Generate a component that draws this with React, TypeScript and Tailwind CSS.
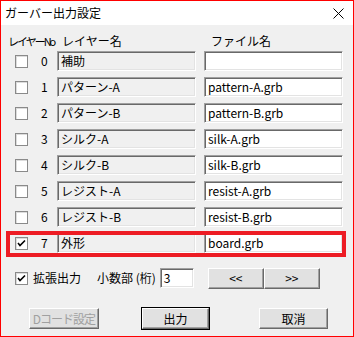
import React from 'react';

type Layer = { no: number; name: string; file: string; checked: boolean };

const layers: Layer[] = [
  { no: 0, name: '補助', file: '', checked: false },
  { no: 1, name: 'パターン-A', file: 'pattern-A.grb', checked: false },
  { no: 2, name: 'パターン-B', file: 'pattern-B.grb', checked: false },
  { no: 3, name: 'シルク-A', file: 'silk-A.grb', checked: false },
  { no: 4, name: 'シルク-B', file: 'silk-B.grb', checked: false },
  { no: 5, name: 'レジスト-A', file: 'resist-A.grb', checked: false },
  { no: 6, name: 'レジスト-B', file: 'resist-B.grb', checked: false },
  { no: 7, name: '外形', file: 'board.grb', checked: true },
];

const sunken =
  'border border-t-[#a0a0a0] border-l-[#a0a0a0] border-r-white border-b-white shadow-[inset_1px_1px_0_#696969,inset_-1px_-1px_0_#e3e3e3]';

const raised =
  'border border-t-white border-l-white border-r-[#696969] border-b-[#696969] shadow-[inset_-1px_-1px_0_#a0a0a0] bg-[#e1e1e1]';

function CheckBox({ checked }: { checked: boolean }) {
  return (
    <div className="flex h-[13px] w-[13px] shrink-0 items-center justify-center border border-[#8a8a8a] bg-white shadow-[inset_1px_1px_0_#dcdcdc]">
      {checked && (
        <svg width="9" height="9" viewBox="0 0 9 9">
          <path d="M1 4 L3 6.5 L8 1.5" stroke="#000" strokeWidth="1.6" fill="none" />
        </svg>
      )}
    </div>
  );
}

function Btn({ label, disabled, primary, w }: { label: string; disabled?: boolean; primary?: boolean; w: string }) {
  return (
    <div className={`${primary ? 'border border-[#000]' : ''} flex`}>
      <div
        className={`${raised} ${w} flex h-[21px] items-center justify-center whitespace-nowrap text-[12px] ${
          disabled ? 'tracking-[-1px] text-[#a0a0a0]' : 'text-black'
        }`}
      >
        {label}
      </div>
    </div>
  );
}

export default function App() {
  return (
    <div
      className="relative flex h-[337px] w-[354px] flex-col border border-[#ff0000] bg-[#f0f0f0] text-[12px] text-black"
      style={{ fontFamily: '"Noto Sans CJK JP", "Liberation Sans", sans-serif' }}
    >
      <div className="flex h-[24px] items-center justify-between bg-white pl-[4px] pr-[9px]">
        <span className="text-[12px] leading-none">ガーバー出力設定</span>
        <svg width="11" height="11" viewBox="0 0 11 11">
          <path d="M0.5 0.5 L10.5 10.5 M10.5 0.5 L0.5 10.5" stroke="#000" strokeWidth="1" />
        </svg>
      </div>

      <div className="mt-[8px] flex h-[16px] items-center whitespace-nowrap leading-none">
        <span className="ml-[7px] w-[54px] text-[11px] tracking-[-2px]">レイヤーNo</span>
        <span className="w-[149px]">レイヤー名</span>
        <span>ファイル名</span>
      </div>

      <div className="mt-[2px] flex flex-col gap-[6px]">
        {layers.map((l) => (
          <div key={l.no} className="flex h-[20px] items-center pl-[14px]">
            <CheckBox checked={l.checked} />
            <span className="w-[29px] pl-[13px] leading-none">{l.no}</span>
            <div className={`${sunken} flex h-[20px] w-[139px] items-center bg-[#f0f0f0] pl-[3px] leading-none`}>
              {l.name}
            </div>
            <div className={`${sunken} ml-[8px] flex h-[20px] w-[139px] items-center bg-white pl-[3px] leading-none`}>
              {l.file}
            </div>
          </div>
        ))}
      </div>

      <div className="mt-[15px] flex h-[20px] items-center whitespace-nowrap pl-[14px]">
        <CheckBox checked />
        <span className="ml-[5px] leading-none">拡張出力</span>
        <span className="ml-[16px] leading-none">小数部 (桁)</span>
        <div className={`${sunken} ml-[4px] flex h-[20px] w-[34px] items-center bg-white pl-[3px] leading-none`}>3</div>
        <div className="ml-[14px] flex">
          <Btn label="<<" w="w-[56px]" />
          <Btn label=">>" w="w-[56px]" />
        </div>
      </div>

      <div className="mt-[19px] flex items-center">
        <div className="ml-[28px]">
          <Btn label="Dコード設定" disabled w="w-[70px]" />
        </div>
        <div className="ml-[42px]">
          <Btn label="出力" primary w="w-[67px]" />
        </div>
        <div className="ml-[49px]">
          <Btn label="取消" w="w-[69px]" />
        </div>
      </div>

      <div className="pointer-events-none absolute left-[5px] top-[230px] h-[26px] w-[340px] border-[4px] border-[#ed1c24]" />
    </div>
  );
}
